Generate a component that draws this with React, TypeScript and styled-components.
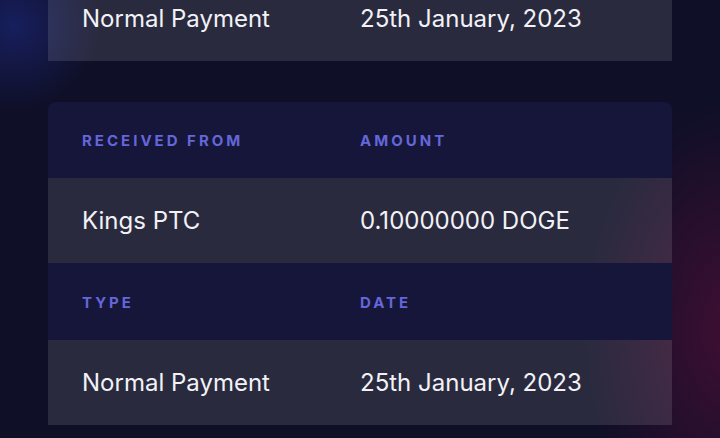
import { FC } from 'react';
import styled, { createGlobalStyle } from 'styled-components';

const GlobalStyle = createGlobalStyle`
  html, body {
    margin: 0;
    height: 100%;
    overflow: hidden;
  }

  body {
    font-family: Inter, 'Noto Sans', sans-serif;
    background-color: #0f0f27;
    background-image:
      radial-gradient(circle at 14px 26px, rgba(28, 42, 130, 0.6), transparent 85px),
      radial-gradient(ellipse 150px 230px at 735px 330px, rgba(80, 14, 55, 0.75), transparent);
    background-repeat: no-repeat;
  }
`;

const Page = styled.div`
  display: flex;
  flex-direction: column;
  gap: 41px;
  padding: 0 48px;
  margin-top: -262px;
`;

const Card = styled.section`
  display: flex;
  flex-direction: column;
  border-radius: 8px 8px 0 0;
  overflow: hidden;
`;

const Row = styled.div<{ $kind: 'label' | 'value'; $tall?: boolean }>`
  display: grid;
  grid-template-columns: 1fr 1fr;
  align-items: center;
  padding: 0 34px;
  height: ${props => (props.$kind === 'label' ? (props.$tall ? '77px' : '76px') : '85px')};
  background-color: ${props =>
    props.$kind === 'label' ? '#15163a' : 'rgba(255, 255, 255, 0.115)'};
`;

const Label = styled.div`
  color: #6466d9;
  font-size: 15px;
  font-weight: 700;
  letter-spacing: 3px;
  text-transform: uppercase;
  padding-top: 1px;
`;

const Value = styled.div`
  color: #f2f2f6;
  font-size: 24px;
  font-weight: 400;
`;

type Field = { label: string; value: string };

const payment: Field[][] = [
  [
    { label: 'Received from', value: 'Kings PTC' },
    { label: 'Amount', value: '0.10000000 DOGE' },
  ],
  [
    { label: 'Type', value: 'Normal Payment' },
    { label: 'Date', value: '25th January, 2023' },
  ],
];

const PaymentCard: FC<{ rows: Field[][] }> = ({ rows }) => (
  <Card>
    {rows.map((pair, i) => (
      <div key={i}>
        <Row $kind='label' $tall={i > 0}>
          {pair.map(f => (
            <Label key={f.label}>{f.label}</Label>
          ))}
        </Row>
        <Row $kind='value'>
          {pair.map(f => (
            <Value key={f.label}>{f.value}</Value>
          ))}
        </Row>
      </div>
    ))}
  </Card>
);

export default function App() {
  return (
    <>
      <GlobalStyle />
      <Page>
        <PaymentCard rows={payment} />
        <PaymentCard rows={payment} />
      </Page>
    </>
  );
}
